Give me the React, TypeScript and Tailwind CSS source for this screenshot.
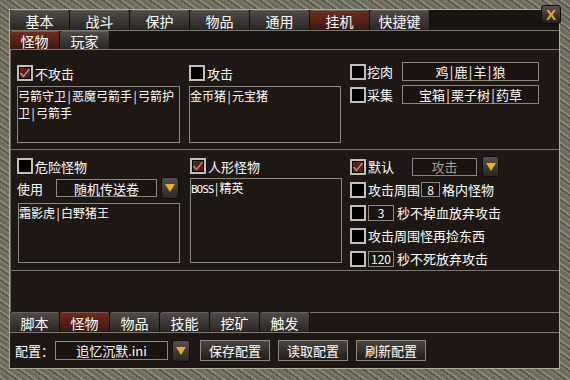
import React from 'react';

const topTabs = ['基本', '战斗', '保护', '物品', '通用', '挂机', '快捷键'];
const bottomTabs = ['脚本', '怪物', '物品', '技能', '挖矿', '触发'];

const tabBase =
  'h-full flex items-center justify-center text-[14px] leading-none text-white rounded-t-[3px] border-t border-r border-t-[#66615c] border-r-[#120e0c]';
const tabOff = 'bg-[linear-gradient(#4f4a46,#2a2624)]';
const tabOn = 'bg-[linear-gradient(#6f2b1c,#3e170f)]';

// SimSun-style half width pipe between names
const Piped = ({ text }: { text: string }) => (
  <>
    {text.split('|').map((part, i) => (
      <React.Fragment key={i}>
        {i > 0 && <span className="inline-block w-[6px] text-center">|</span>}
        {part}
      </React.Fragment>
    ))}
  </>
);

const Check = ({ on }: { on?: boolean }) => (
  <div
    className={`w-[16px] h-[16px] shrink-0 border-2 border-[#c4bfb4] shadow-[inset_0_0_0_1px_#000] flex items-center justify-center ${
      on ? 'bg-[#5a1d1b]' : 'bg-black'
    }`}
  >
    {on && (
      <svg width="12" height="12" viewBox="0 0 12 12">
        <path d="M1.5 6 L4.5 9.5 L10.5 2" stroke="#a8958a" strokeWidth="1.4" fill="none" />
      </svg>
    )}
  </div>
);

const DropBtn = ({ cls }: { cls: string }) => (
  <div
    className={`shrink-0 flex items-center justify-center rounded-[3px] border border-[#0f0d0c] bg-[linear-gradient(#56514c,#2b2724)] ${cls}`}
  >
    <svg width="10" height="8" viewBox="0 0 10 8">
      <path d="M0 0H10L5 8Z" fill="#e8b020" />
    </svg>
  </div>
);

const boxCls =
  'shrink-0 flex items-center justify-center border border-[#8a8680] bg-[#1a1310] text-white text-[13px] leading-none';

const Label = ({ children, cls = '' }: { children: React.ReactNode; cls?: string }) => (
  <span className={`text-[13px] leading-none text-white whitespace-nowrap ${cls}`}>{children}</span>
);

const Btn = ({ children }: { children: React.ReactNode }) => (
  <div className="w-[70px] h-[21px] flex items-center justify-center border border-[#8d8880] bg-[linear-gradient(#4b4541,#221c19)] text-[13px] leading-none text-white">
    {children}
  </div>
);

export default function App() {
  return (
    <div className="relative w-[570px] h-[380px] pt-[9px] pl-[9px] pr-[10px] pb-[11px] bg-[#6e6b5d] bg-[repeating-linear-gradient(35deg,#5b5a50_0_2px,#8d8875_2px_4px,#6c6a5b_4px_7px,#7f7a66_7px_9px)] font-['Noto_Sans_CJK_SC',sans-serif]">
      <div className="h-full flex flex-col border border-[#b0ab98] bg-[#1e1713]">
        {/* main tabs */}
        <div className="h-[21px] shrink-0 flex border-b border-[#7a7671] bg-[#1a1411]">
          {topTabs.map((t) => (
            <div key={t} className={`w-[60px] ${tabBase} ${t === '挂机' ? tabOn : tabOff}`}>
              {t}
            </div>
          ))}
        </div>

        {/* sub tabs */}
        <div className="h-[19px] shrink-0 flex border-b border-[#7a7671] bg-[#1a1411]">
          <div className={`w-[50px] ${tabBase} ${tabOn}`}>怪物</div>
          <div className={`w-[50px] ${tabBase} ${tabOff}`}>玩家</div>
        </div>

        {/* content */}
        <div className="h-[262px] shrink-0 flex flex-col border-l border-[#6d6863]">
          {/* section 1 */}
          <div className="h-[100px] shrink-0 flex pl-[6px] border-b border-[#77736e]">
            <div className="w-[163px] mt-[15px] flex flex-col">
              <div className="h-[16px] flex items-center gap-[2px]">
                <Check on />
                <Label>不攻击</Label>
              </div>
              <div className="mt-[5px] h-[57px] border border-[#8a8680] text-[12px] leading-[17px] text-white">
                <div>
                  <Piped text="弓箭守卫|恶魔弓箭手|弓箭护" />
                </div>
                <div>
                  <Piped text="卫|弓箭手" />
                </div>
              </div>
            </div>
            <div className="w-[152px] ml-[9px] mt-[15px] flex flex-col">
              <div className="h-[16px] flex items-center gap-[2px]">
                <Check />
                <Label>攻击</Label>
              </div>
              <div className="mt-[5px] h-[57px] border border-[#8a8680] text-[12px] leading-[17px] text-white">
                <Piped text="金币猪|元宝猪" />
              </div>
            </div>
            <div className="ml-[9px] mt-[12px] flex flex-col gap-[4px]">
              <div className="h-[19px] flex items-center">
                <Check />
                <Label cls="ml-[1px]">挖肉</Label>
                <div className={`${boxCls} ml-[9px] w-[137px] h-[19px]`}>
                  <Piped text="鸡|鹿|羊|狼" />
                </div>
              </div>
              <div className="h-[19px] flex items-center">
                <Check />
                <Label cls="ml-[1px]">采集</Label>
                <div className={`${boxCls} ml-[9px] w-[137px] h-[19px]`}>
                  <Piped text="宝箱|栗子树|药草" />
                </div>
              </div>
            </div>
          </div>

          {/* section 2 */}
          <div className="h-[121px] shrink-0 flex pl-[6px] border-b border-[#77736e]">
            <div className="w-[163px] mt-[8px] flex flex-col">
              <div className="h-[16px] flex items-center gap-[2px]">
                <Check />
                <Label>危险怪物</Label>
              </div>
              <div className="mt-[3px] h-[22px] flex items-center">
                <Label cls="w-[39px]">使用</Label>
                <div className={`${boxCls} w-[101px] h-[18px]`}>随机传送卷</div>
                <DropBtn cls="ml-[4px] w-[18px] h-[22px]" />
              </div>
              <div className="mt-[4px] ml-[1px] w-[162px] h-[60px] border border-[#8a8680] text-[12px] leading-[17px] text-white">
                <Piped text="霜影虎|白野猪王" />
              </div>
            </div>
            <div className="w-[152px] ml-[10px] mt-[8px] flex flex-col">
              <div className="h-[16px] flex items-center gap-[2px]">
                <Check on />
                <Label>人形怪物</Label>
              </div>
              <div className="mt-[4px] h-[85px] border border-[#8a8680] text-[12px] leading-[17px] text-white">
                <span className="font-['DejaVu_Sans_Mono',monospace] text-[11px] tracking-[-1px]">BOSS</span>
                <Piped text="|精英" />
              </div>
            </div>
            <div className="ml-[8px] mt-[5px] flex flex-col">
              <div className="h-[23px] flex items-center">
                <Check on />
                <Label cls="ml-[2px]">默认</Label>
                <div className={`${boxCls} ml-[18px] w-[65px] h-[18px] !text-[#a29d98]`}>攻击</div>
                <DropBtn cls="ml-[5px] w-[17px] h-[21px]" />
              </div>
              <div className="h-[23px] flex items-center">
                <Check />
                <Label cls="ml-[2px]">攻击周围</Label>
                <div className={`${boxCls} ml-[1px] w-[19px] h-[15px] !text-[12px]`}>8</div>
                <Label cls="ml-[2px]">格内怪物</Label>
              </div>
              <div className="h-[23px] flex items-center">
                <Check />
                <div className={`${boxCls} ml-[2px] w-[26px] h-[16px] !text-[12px]`}>3</div>
                <Label cls="ml-[3px]">秒不掉血放弃攻击</Label>
              </div>
              <div className="h-[23px] flex items-center">
                <Check />
                <Label cls="ml-[2px]">攻击周围怪再捡东西</Label>
              </div>
              <div className="h-[23px] flex items-center">
                <Check />
                <div className={`${boxCls} ml-[2px] w-[26px] h-[16px] !text-[12px]`}>120</div>
                <Label cls="ml-[3px]">秒不死放弃攻击</Label>
              </div>
            </div>
          </div>
          <div className="flex-1" />
        </div>

        {/* bottom tabs */}
        <div className="h-[21px] shrink-0 flex border-b border-[#7a7671]">
          {bottomTabs.map((t) => (
            <div key={t} className={`w-[50px] ${tabBase} ${t === '怪物' ? tabOn : tabOff}`}>
              {t}
            </div>
          ))}
          <div className="flex-1 border-t border-[#7a7671]" />
        </div>

        {/* config row */}
        <div className="flex-1 flex items-center pl-[5px]">
          <Label cls="w-[40px]">配置：</Label>
          <div className={`${boxCls} w-[113px] h-[19px]`}>追忆沉默.ini</div>
          <DropBtn cls="ml-[4px] w-[18px] h-[22px]" />
          <div className="ml-[10px] flex gap-[8px]">
            <Btn>保存配置</Btn>
            <Btn>读取配置</Btn>
            <Btn>刷新配置</Btn>
          </div>
        </div>
      </div>

      {/* close button */}
      <div className="absolute left-[541px] top-[5px] w-[20px] h-[19px] flex items-center justify-center rounded-[3px] border border-[#0e0c0b] bg-[linear-gradient(#57524d,#24201d)] font-['Liberation_Sans',sans-serif] font-black text-[15px] leading-none text-[#e6a820]">
        X
      </div>
    </div>
  );
}
